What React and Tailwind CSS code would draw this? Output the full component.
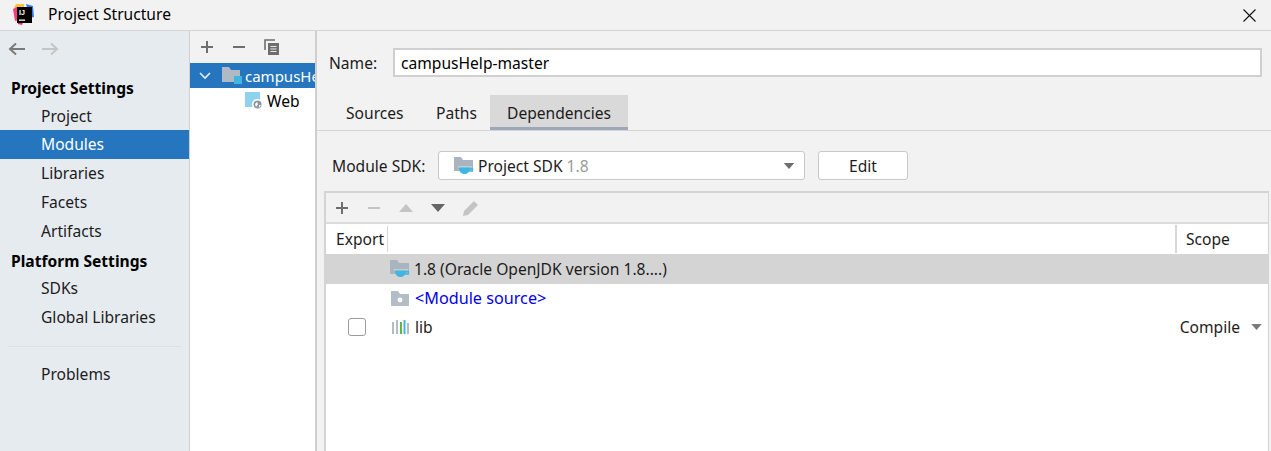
import React from "react";

const FONT = "[font-family:'Noto_Sans','Open_Sans',sans-serif]";

function Folder({ className = "" }) {
  return (
    <svg width="18" height="15" viewBox="0 0 18 15" className={className}>
      <path d="M0 0h7l2 3h9v12H0z" fill="#b0bac4" />
    </svg>
  );
}
function JdkFolder() {
  return (
    <svg width="20" height="18" viewBox="0 0 20 18" className="shrink-0">
      <path d="M0 0h7l2 3h10v11H0z" fill="#a9b4bf" />
      <path d="M4 9.5h14v1H4z" fill="#ffffff" opacity="0.6" />
      <path d="M5 10.5h11c0 4-2 6.5-5.5 6.5S5 14.5 5 10.5z" fill="#40b6e0" />
      <path d="M15.5 11.5h3v2.5h-3.5" fill="none" stroke="#40b6e0" strokeWidth="1.3" />
    </svg>
  );
}
function Plus({ c = "#6e6e6e" }) {
  return (
    <svg width="14" height="14" viewBox="0 0 14 14">
      <path d="M7 1v12M1 7h12" stroke={c} strokeWidth="2" />
    </svg>
  );
}
function Minus({ c = "#6e6e6e" }) {
  return (
    <svg width="14" height="14" viewBox="0 0 14 14">
      <path d="M1 7h12" stroke={c} strokeWidth="2" />
    </svg>
  );
}
function Copy() {
  return (
    <svg width="16" height="16" viewBox="0 0 16 16">
      <path d="M1 11V1h10" fill="none" stroke="#6e6e6e" strokeWidth="1.6" />
      <path d="M4 4h11v12H4z" fill="#6e6e6e" />
      <path d="M6.5 7.5h6M6.5 10h6M6.5 12.5h6" stroke="#e8e8e8" strokeWidth="1" />
    </svg>
  );
}
function Arrow({ c, flip }) {
  return (
    <svg width="18" height="14" viewBox="0 0 18 14" style={flip ? { transform: "scaleX(-1)" } : undefined}>
      <path d="M17 7H2M8 1.5 2 7l6 5.5" fill="none" stroke={c} strokeWidth="2" />
    </svg>
  );
}
function Tri({ c, up, w = 14, h = 8 }) {
  return (
    <svg width={w} height={h} viewBox="0 0 14 8">
      <path d={up ? "M7 0l7 8H0z" : "M0 0h14L7 8z"} fill={c} />
    </svg>
  );
}

function NavItem({ label, active, h = "h-[29px]", extra = "" }) {
  return (
    <div className={`${h} flex items-center pl-[41px] ${active ? "bg-[#2675bf] text-white" : "text-[#1c1c1c]"} ${extra}`}>
      {label}
    </div>
  );
}
function NavHead({ label, extra = "" }) {
  return <div className={`h-[28px] flex items-center pl-[11px] font-bold text-black ${extra}`}>{label}</div>;
}

export default function App() {
  return (
    <div className={`w-[1271px] h-[451px] overflow-hidden flex flex-col bg-[#f2f2f2] text-[15.6px] leading-none text-[#1c1c1c] ${FONT}`}>
      {/* Title bar */}
      <div className="h-[31px] shrink-0 flex items-center border-b border-[#d4d4d4] pl-[13px] pr-[15px]">
        <svg width="21" height="22" viewBox="0 0 21 22" className="shrink-0">
          <path d="M3 0h8v4H1z" fill="#f9c33a" />
          <path d="M0 5l4-2 2 13-4 1z" fill="#fc3a7c" />
          <path d="M4 16h7l-2 5-4-1z" fill="#ef2d6a" />
          <path d="M13 0l7 2 1 11-4 1z" fill="#2f7bf0" />
          <path d="M4 3h15v16H4z" fill="#000" />
          <text x="6" y="11" fill="#fff" fontSize="7" fontWeight="700" fontFamily="'Liberation Sans',sans-serif">IJ</text>
          <path d="M6 15.5h6v1.3H6z" fill="#fff" />
        </svg>
        <span className="ml-[14px] text-black">Project Structure</span>
        <svg width="13" height="13" viewBox="0 0 13 13" className="ml-auto">
          <path d="M.5.5l12 12M12.5.5l-12 12" stroke="#111" strokeWidth="1.1" />
        </svg>
      </div>

      <div className="flex-1 flex min-h-0">
        {/* Sidebar */}
        <div className="w-[190px] shrink-0 bg-[#e6ebf0] border-r border-[#d0d0d0] flex flex-col">
          <div className="h-[35px] flex items-center gap-[15px] pl-[8px]">
            <Arrow c="#7a7a7a" />
            <Arrow c="#c4c4c4" flip />
          </div>
          <div className="h-[8px]" />
          <NavHead label="Project Settings" extra="pt-[2px]" />
          <NavItem label="Project" h="h-[28px]" extra="pt-[2px]" />
          <NavItem label="Modules" active />
          <NavItem label="Libraries" />
          <NavItem label="Facets" />
          <NavItem label="Artifacts" />
          <NavHead label="Platform Settings" extra="pt-[4px]" />
          <NavItem label="SDKs" />
          <NavItem label="Global Libraries" />
          <div className="h-[28px] flex items-center px-[8px]">
            <div className="h-[1px] w-full bg-[#dde1e5]" />
          </div>
          <NavItem label="Problems" />
        </div>

        {/* Module tree */}
        <div className="w-[127px] shrink-0 bg-white border-r-2 border-[#cfcfcf] flex flex-col overflow-hidden">
          <div className="h-[32px] shrink-0 bg-[#f2f2f2] flex items-center gap-[18px] pl-[10px]">
            <Plus />
            <Minus />
            <Copy />
          </div>
          <div className="h-[25px] shrink-0 bg-[#2675bf] text-white flex items-center pl-[9px] whitespace-nowrap overflow-hidden">
            <svg width="12" height="8" viewBox="0 0 12 8" className="shrink-0">
              <path d="M1 1l5 5 5-5" fill="none" stroke="#e6eef6" strokeWidth="1.6" />
            </svg>
            <span className="relative ml-[11px] mr-[3px] shrink-0 w-[20px] h-[17px]">
              <Folder />
              <span className="absolute right-0 bottom-0 w-[8px] h-[8px] bg-[#40b6e0]" />
            </span>
            <span className="text-[15px] pt-[2px]">campusHelp-master</span>
          </div>
          <div className="h-[25px] shrink-0 flex items-center pl-[55px] text-black">
            <span className="relative w-[17px] h-[17px] mr-[5px] shrink-0">
              <span className="block w-[15px] h-[15px] bg-[#8fd2ee]" />
              <svg width="11" height="11" viewBox="0 0 11 11" className="absolute right-[-1px] bottom-[-1px]">
                <circle cx="5.5" cy="5.5" r="5.5" fill="#fff" />
                <circle cx="5.5" cy="5.5" r="4" fill="#8c959e" />
                <path d="M3 5l2-2 1 2-2 3zM7 6h2L7 9z" fill="#fff" />
              </svg>
            </span>
            <span className="pt-[2px]">Web</span>
          </div>
        </div>

        {/* Right panel */}
        <div className="flex-1 min-w-0 flex flex-col">
          <div className="flex items-center pt-[17px] pl-[12px] pr-[9px]">
            <span className="w-[64px] shrink-0 pt-[2px]">Name:</span>
            <div className="flex-1 h-[29px] bg-white border-2 border-[#d0d0d0] flex items-center pl-[6px] text-black">
              <span className="pt-[2px]">campusHelp-master</span>
            </div>
          </div>
          <div className="h-[36px] mt-[18px] shrink-0 flex items-stretch border-b border-[#d4d4d4] pl-[12px]">
            <div className="w-[92px] pl-[17px] flex items-center pt-[2px]">Sources</div>
            <div className="w-[69px] pl-[15px] flex items-center pt-[2px]">Paths</div>
            <div className="w-[138px] flex items-center justify-center bg-[#d9d9d9] border-b-[3px] border-[#9ca7b8] pt-[5px]">
              Dependencies
            </div>
          </div>
          <div className="flex items-center mt-[20px] pl-[15px]">
            <span className="w-[106px] shrink-0 pt-[2px]">Module SDK:</span>
            <div className="w-[367px] h-[29px] bg-white border border-[#c9c9c9] rounded-[3px] flex items-center pl-[15px] pr-[9px]">
              <JdkFolder />
              <span className="ml-[4px] pt-[2px]">Project SDK</span>
              <span className="ml-[4px] text-[#9a9a9a] pt-[2px]">1.8</span>
              <span className="ml-auto"><Tri c="#6e6e6e" w={12} h={6} /></span>
            </div>
            <div className="ml-[13px] w-[90px] h-[29px] bg-white border border-[#c9c9c9] rounded-[3px] flex items-center justify-center">
              <span className="pt-[2px]">Edit</span>
            </div>
          </div>

          {/* Table panel */}
          <div className="flex-1 mt-[11px] ml-[7px] mr-[2px] bg-white border-2 border-b-0 border-[#d4d4d4] border-r-[1px] flex flex-col">
            <div className="h-[31px] shrink-0 bg-[#f2f2f2] border-b-2 border-[#dcdcdc] flex items-center pl-[9px]">
              <Plus />
              <span className="ml-[18px]"><Minus c="#c4c4c4" /></span>
              <span className="ml-[18px]"><Tri c="#c4c4c4" up /></span>
              <span className="ml-[18px]"><Tri c="#666666" /></span>
              <svg width="18" height="18" viewBox="0 0 18 18" className="ml-[17px]">
                <path d="M1 17l1-5L12 2l4 4L6 16z" fill="#c4c4c4" />
              </svg>
            </div>
            <div className="h-[30px] shrink-0 flex items-center">
              <div className="w-[62px] h-[26px] flex items-center pl-[10px] pt-[2px] border-r border-[#d8d8d8]">Export</div>
              <div className="flex-1 h-[26px]" />
              <div className="w-[93px] h-[28px] flex items-center pl-[9px] pt-[2px] border-l-2 border-[#d8d8d8]">Scope</div>
            </div>
            <div className="h-[30px] shrink-0 bg-[#d4d4d4] flex items-center pl-[64px]">
              <JdkFolder />
              <span className="ml-[4px] pt-[2px]">1.8 (Oracle OpenJDK version 1.8....)</span>
            </div>
            <div className="h-[29px] shrink-0 flex items-center pl-[65px]">
              <svg width="18" height="15" viewBox="0 0 18 15" className="shrink-0">
                <path d="M0 0h7l2 3h9v12H0z" fill="#b4bdc6" />
                <circle cx="9" cy="9" r="2.4" fill="#fff" />
              </svg>
              <span className="ml-[6px] text-[#0000ee] text-[16.2px]">&lt;Module source&gt;</span>
            </div>
            <div className="h-[28px] shrink-0 flex items-center">
              <span className="ml-[22px] w-[18px] h-[18px] bg-white border border-[#9c9c9c] rounded-[3px] shrink-0" />
              <svg width="18" height="16" viewBox="0 0 18 16" className="ml-[25px] shrink-0">
                <path d="M1 3h2v12H1z" fill="#b4bdc6" />
                <path d="M5 1h2v14H5z" fill="#b4bdc6" />
                <path d="M9 3h2v12H9z" fill="#62b543" />
                <path d="M12.5 1h2v14h-2z" fill="#40b6e0" />
                <path d="M16 4h2v11h-2z" fill="#b4bdc6" />
              </svg>
              <span className="ml-[6px] text-[#1c1c1c] pt-[2px]">lib</span>
              <span className="ml-auto pt-[2px]">Compile</span>
              <span className="ml-[11px] mr-[6px]"><Tri c="#7a7a7a" w={11} h={6} /></span>
            </div>
          </div>
        </div>
      </div>
    </div>
  );
}
